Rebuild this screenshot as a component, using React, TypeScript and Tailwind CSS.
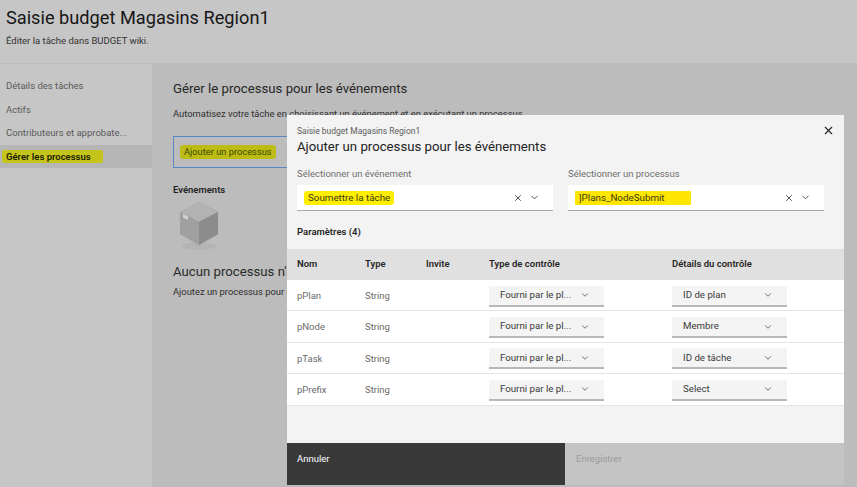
import { ChevronDown, X } from "lucide-react";

const rows = [
  { nom: "pPlan", detail: "ID de plan" },
  { nom: "pNode", detail: "Membre" },
  { nom: "pTask", detail: "ID de tâche" },
  { nom: "pPrefix", detail: "Select" },
];

function Cube() {
  return (
    <svg width="44" height="52" viewBox="0 0 44 52">
      <ellipse cx="22" cy="46" rx="17" ry="4" fill="#b4b4b4" />
      <path d="M22 2 L41 12 L41 34 L22 45 Z" fill="#8f8f8f" />
      <path d="M22 2 L3 12 L3 34 L22 45 Z" fill="#a3a3a3" />
      <path d="M22 2 L41 12 L22 22 L3 12 Z" fill="#b2b2b2" />
      <path d="M22 22 L41 12 L41 34 L22 45 Z" fill="#8c8c8c" />
      <path d="M22 22 L3 12 L3 34 L22 45 Z" fill="#a0a0a0" />
      <path d="M6 14 L11 16.5 L11 20 L6 17.5 Z" fill="#d2d2d2" />
    </svg>
  );
}

function Field({ label, value, highlight }: { label: string; value: string; highlight: string }) {
  return (
    <div className="w-[256px]">
      <p className="text-[9.5px] leading-[12px] text-[#6f6f6f]">{label}</p>
      <div className="mt-[5px] flex h-[26px] items-center border-b border-[#a8a8a8] bg-white pl-[7px] pr-[13px]">
        <span className={`${highlight} px-[4px] text-[9.8px] leading-[14px] text-[#3a3a10]`}>{value}</span>
        <X size={10} strokeWidth={2} className="ml-auto text-[#333333]" />
        <ChevronDown size={11} strokeWidth={2} className="ml-[6px] text-[#444444]" />
      </div>
    </div>
  );
}

function RowSelect({ value, width }: { value: string; width: string }) {
  return (
    <div className={`${width} flex h-[21px] shrink-0 items-center justify-between border-b-2 border-[#b8b8b8] bg-[#f4f4f4] pl-[11px] pr-[14px] text-[9.7px] text-[#3a3a3a]`}>
      <span className="whitespace-nowrap">{value}</span>
      <ChevronDown size={10} strokeWidth={2} className="shrink-0 text-[#555555]" />
    </div>
  );
}

export default function App() {
  return (
    <div className="relative flex h-[487px] w-[857px] flex-col overflow-hidden bg-[#c6c6c6] font-['Roboto','Noto_Sans',sans-serif] text-[#161616]">
      <header className="h-[64px] shrink-0 border-b border-[#bdbdbd] pl-[6px] pt-[5px]">
        <h1 className="text-[18.2px] leading-[26px]">Saisie budget Magasins Region1</h1>
        <p className="mt-[3px] text-[9.5px] leading-[13px] text-[#333333]">Éditer la tâche dans BUDGET wiki.</p>
      </header>

      <div className="flex flex-1">
        <nav className="w-[152px] shrink-0 pt-[10px] text-[9.5px] text-[#5a5a5a]">
          <div className="flex h-[24px] items-center pl-[6px]">Détails des tâches</div>
          <div className="flex h-[24px] items-center pl-[6px]">Actifs</div>
          <div className="flex h-[23px] items-center pl-[6px]">Contributeurs et approbate...</div>
          <div className="flex h-[23px] items-center bg-[#b6b6b6] pl-[2px]">
            <span className="rounded-[2px] bg-[#c4c41c] pl-[4px] pr-[12px] font-semibold leading-[13px] text-[#1c1c00]">Gérer les processus</span>
          </div>
        </nav>

        <main className="flex-1 bg-[#bcbcbc] pl-[21px] pt-[15px]">
          <h2 className="text-[13.2px] leading-[20px] text-[#262626]">Gérer le processus pour les événements</h2>
          <p className="mt-[8px] whitespace-nowrap text-[9.4px] leading-[14px] text-[#2e2e2e]">
            Automatisez votre tâche en choisissant un événement et en exécutant un processus.
          </p>
          <div className="mt-[15px] flex h-[32px] w-[160px] items-center border border-[#5a86c8] pl-[6px]">
            <span className="rounded-[3px] bg-[#bcbc14] px-[4px] text-[9.3px] leading-[14px] text-[#3c4a00]">Ajouter un processus</span>
          </div>
          <p className="mt-[15px] text-[9.5px] font-semibold leading-[14px] text-[#1f1f1f]">Evénements</p>
          <div className="ml-[4px] mt-[3px]">
            <Cube />
          </div>
          <h3 className="mt-[10px] whitespace-nowrap text-[13.2px] leading-[20px] text-[#2a2a2a]">Aucun processus n'a été ajouté</h3>
          <p className="mt-[3px] whitespace-nowrap text-[9.4px] leading-[14px] text-[#2e2e2e]">Ajoutez un processus pour commencer.</p>
        </main>
      </div>

      {/* modal over the page */}
      <section className="absolute left-[287px] top-[115px] flex h-[370px] w-[557px] flex-col bg-[#f3f3f3]">
        <X size={13} strokeWidth={2} className="absolute right-[9px] top-[9px] text-[#222222]" />
        <p className="pl-[10px] pt-[10px] text-[8.5px] leading-[12px] text-[#5c5c5c]">Saisie budget Magasins Region1</p>
        <h2 className="pl-[10px] text-[13.2px] leading-[20px] text-[#222222]">Ajouter un processus pour les événements</h2>
        <div className="mt-[11px] flex gap-[15px] pl-[10px]">
          <Field label="Sélectionner un événement" value="Soumettre la tâche" highlight="rounded-[3px] bg-[#ffee00]" />
          <Field label="Sélectionner un processus" value="]Plans_NodeSubmit" highlight="bg-[#ffe600] pr-[26px]" />
        </div>
        <p className="pl-[10px] pt-[14px] text-[9.5px] font-semibold leading-[14px] text-[#262626]">Paramètres (4)</p>

        <div className="mt-[10px] flex h-[31px] items-center bg-[#e0e0e0] pl-[10px] text-[9.5px] font-semibold text-[#262626]">
          <span className="w-[68px]">Nom</span>
          <span className="w-[61px]">Type</span>
          <span className="w-[63px]">Invite</span>
          <span className="w-[183px]">Type de contrôle</span>
          <span>Détails du contrôle</span>
        </div>
        {rows.map((r) => (
          <div key={r.nom} className="flex h-[31.4px] items-center border-b border-[#e4e4e4] bg-white pl-[10px] pt-[2px] text-[9.5px] text-[#6a6a6a]">
            <span className="w-[68px]">{r.nom}</span>
            <span className="w-[124px]">String</span>
            <RowSelect value="Fourni par le pl..." width="w-[115px]" />
            <div className="w-[68px]" />
            <RowSelect value={r.detail} width="w-[115px]" />
          </div>
        ))}

        <div className="mt-auto flex h-[42px]">
          <div className="w-[278px] bg-[#393939] pl-[10px] pt-[9px] text-[9.5px] leading-[14px] text-white">Annuler</div>
          <div className="flex-1 bg-[#c4c4c4] pl-[11px] pt-[9px] text-[9.5px] leading-[14px] text-[#9a9a9a]">Enregistrer</div>
        </div>
      </section>
    </div>
  );
}
